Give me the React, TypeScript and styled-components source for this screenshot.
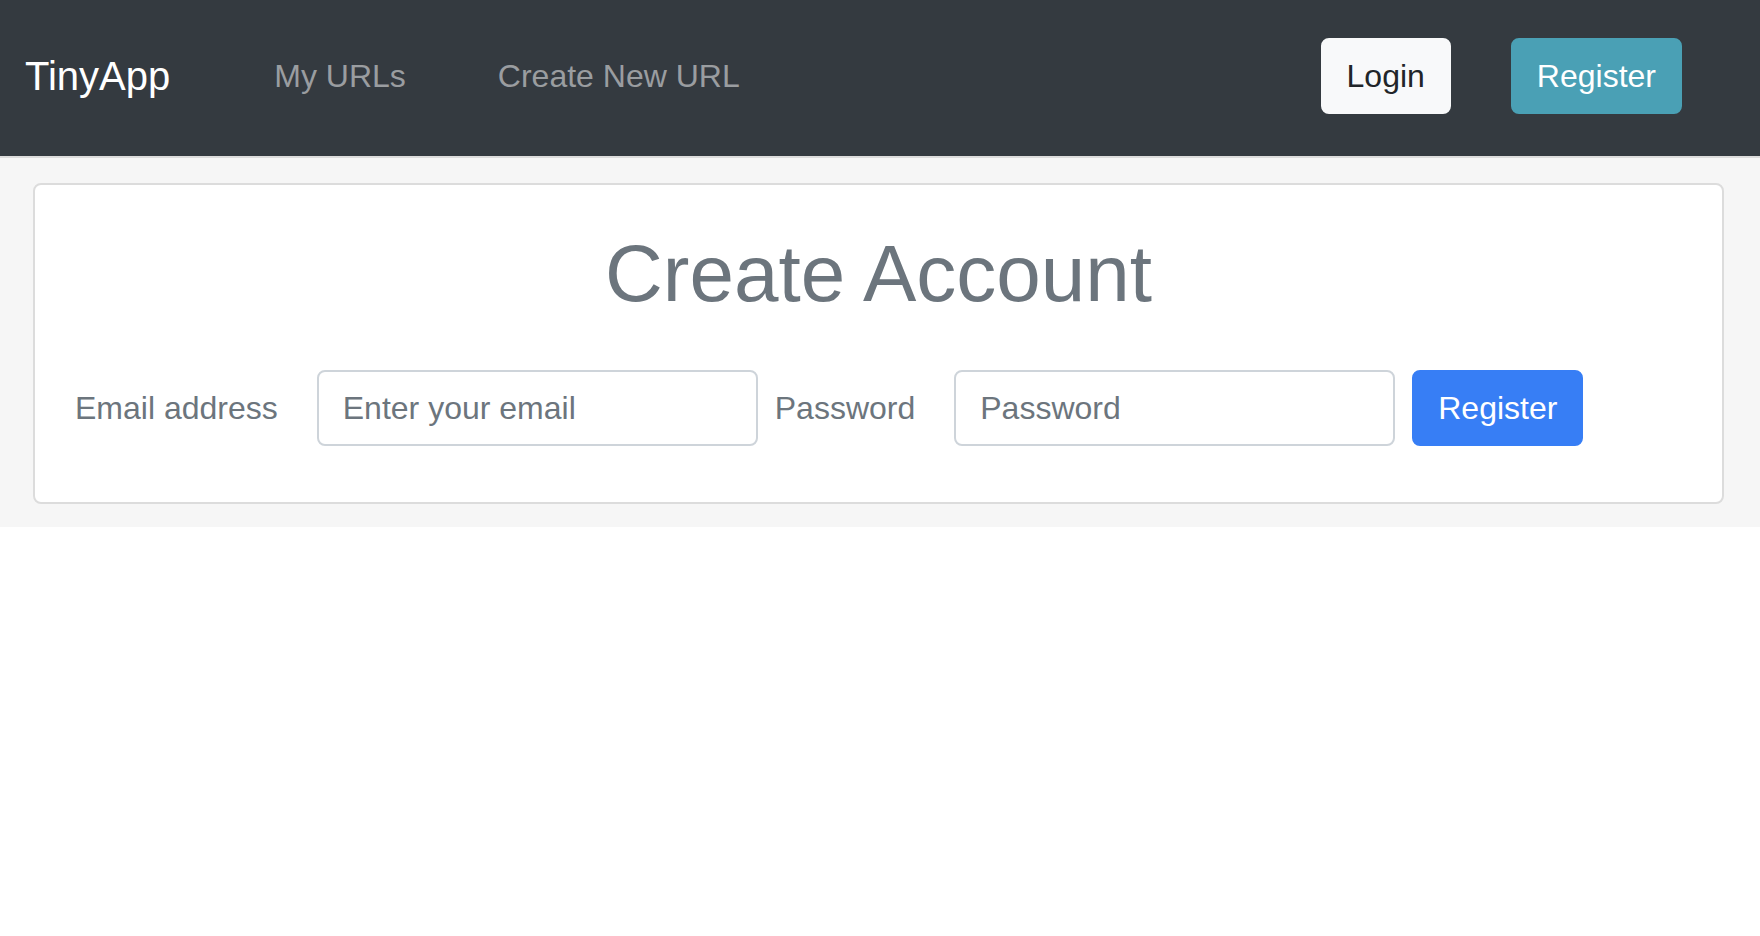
import React from "react";
import styled, { createGlobalStyle, css } from "styled-components";

const GlobalStyle = createGlobalStyle`
  html, body {
    margin: 0;
    padding: 0;
    background: #ffffff;
    font-family: "Liberation Sans", Helvetica, Arial, sans-serif;
  }
  * { box-sizing: border-box; }
`;

const Navbar = styled.nav`
  display: flex;
  align-items: center;
  height: 156px;
  padding: 0 78px 4px 25px;
  background: #343a40;
`;

const Brand = styled.a`
  font-size: 40px;
  line-height: 60px;
  color: #ffffff;
  text-decoration: none;
  margin-right: 58px;
  white-space: nowrap;
`;

const NavLinks = styled.div`
  display: flex;
  align-items: center;
`;

const NavLink = styled.a`
  font-size: 32px;
  line-height: 48px;
  color: #9a9da0;
  text-decoration: none;
  padding: 0 46px;
  white-space: nowrap;
`;

const NavActions = styled.div`
  margin-left: auto;
  display: flex;
  align-items: center;
  gap: 60px;
`;

type Variant = "light" | "info" | "primary";

const variants: Record<Variant, ReturnType<typeof css>> = {
  light: css`
    background: #f8f9fa;
    border-color: #f8f9fa;
    color: #212529;
  `,
  info: css`
    background: #4aa0b5;
    border-color: #4aa0b5;
    color: #ffffff;
  `,
  primary: css`
    background: #377ef5;
    border-color: #377ef5;
    color: #ffffff;
  `,
};

const Button = styled.button<{ $variant: Variant }>`
  font-family: inherit;
  font-size: 32px;
  line-height: 48px;
  padding: 12px 24px;
  border: 2px solid transparent;
  border-radius: 8px;
  cursor: pointer;
  white-space: nowrap;
  ${(p) => variants[p.$variant]}
`;

const Main = styled.main`
  background: #f6f6f6;
  border-top: 2px solid #dcdcdc;
  padding: 25px 36px 23px 33px;
`;

const Card = styled.section`
  background: #ffffff;
  border: 2px solid #dcdcdc;
  border-radius: 8px;
  padding: 41px 40px 56px 40px;
`;

const Title = styled.h1`
  margin: 0 0 48px;
  font-size: 80px;
  line-height: 96px;
  font-weight: 500;
  color: #6c757d;
  text-align: center;
`;

const Form = styled.form`
  display: flex;
  align-items: center;
`;

const Label = styled.label`
  font-size: 32px;
  line-height: 48px;
  color: #6c757d;
  margin-right: 39px;
  white-space: nowrap;
`;

const Input = styled.input`
  width: 441px;
  height: 76px;
  padding: 12px 24px;
  font-family: inherit;
  font-size: 32px;
  color: #495057;
  background: #ffffff;
  border: 2px solid #ced4da;
  border-radius: 8px;
  margin-right: 17px;
  outline: none;
  &::placeholder {
    color: #6c757d;
    opacity: 1;
  }
`;

export default function App() {
  return (
    <>
      <GlobalStyle />
      <Navbar>
        <Brand href="#">TinyApp</Brand>
        <NavLinks>
          <NavLink href="#">My URLs</NavLink>
          <NavLink href="#">Create New URL</NavLink>
        </NavLinks>
        <NavActions>
          <Button $variant="light">Login</Button>
          <Button $variant="info">Register</Button>
        </NavActions>
      </Navbar>
      <Main>
        <Card>
          <Title>Create Account</Title>
          <Form onSubmit={(e) => e.preventDefault()}>
            <Label htmlFor="email">Email address</Label>
            <Input id="email" type="email" placeholder="Enter your email" />
            <Label htmlFor="password">Password</Label>
            <Input id="password" type="password" placeholder="Password" />
            <Button $variant="primary" type="submit">Register</Button>
          </Form>
        </Card>
      </Main>
    </>
  );
}
